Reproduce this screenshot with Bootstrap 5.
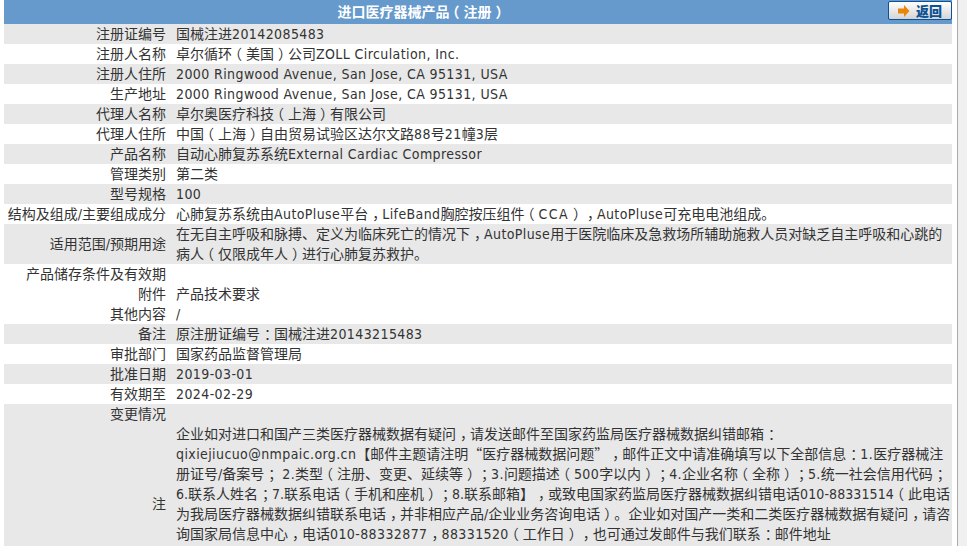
<!DOCTYPE html>
<html lang="zh"><head><meta charset="utf-8">
<link href="https://cdn.jsdelivr.net/npm/bootstrap@5.3.0/dist/css/bootstrap.min.css" rel="stylesheet">
<style>
html,body{height:100%;overflow:hidden}
body{font-family:"DejaVu Sans Condensed","Noto Sans CJK SC",sans-serif;font-size:14px;line-height:20px;color:#333;background:#fff;text-spacing-trim:space-all}
.page-shell{height:546px}
.main-area{width:957px;padding:0 5px 0 4px;height:546px;overflow:hidden}
.side-track{width:10px;background:#f0f0f0;border-left:1px solid #aaa}
.head-bar{height:24px;background:#6699cc;color:#fff;font-weight:700;font-size:14px;line-height:24px;padding-right:113px}
.back-btn{right:0;top:1px;width:64px;height:19px;border:1px solid #0d5296;border-radius:2px;background:linear-gradient(#fff,#d4d4d4);color:#0d5296;font-size:13px;font-weight:900;line-height:17px;font-family:"Noto Sans CJK SC",sans-serif;gap:6px}
.info-table{width:100%;table-layout:fixed;border-collapse:collapse}
.info-table td{padding:0;line-height:20px;vertical-align:middle}
.info-table td.lbl{width:162px;text-align:right}
.info-table td.val{padding-left:10px}
.info-table tr.shade td{background:#e8e8e8}
.info-table td.note-val{padding-bottom:40px}
.lat{letter-spacing:.4px}
.lat-c{letter-spacing:1.4px}
.lat-t{letter-spacing:.1px}
.lp,.rp,.qo,.qc{font-style:normal}
.lp{margin-left:-4px;margin-right:4px}
.rp{margin-left:4px;margin-right:-4px}
.qo,.qc{font-family:"Noto Sans CJK SC",sans-serif;line-height:0;display:inline-block;width:14px}
.qo{text-align:right}
.qc{text-align:left}
</style></head><body>
<div class="page-shell d-flex">
<div class="main-area">
<div class="head-bar position-relative text-center">进口医疗器械产品<i class="lp">（</i>注册<i class="rp">）</i>
<a class="back-btn position-absolute d-flex align-items-center justify-content-center text-decoration-none" href="#"><svg width="12" height="12" viewBox="0 0 12 12"><path d="M0 3.5H6V0L11.5 6L6 12V8.5H0Z" fill="#e8860a"/></svg><span>返回</span></a></div>
<table class="info-table"><tbody>
<tr class="shade"><td class="lbl">注册证编号</td><td class="val">国械注进<span class="lat">20142085483</span></td></tr>
<tr><td class="lbl">注册人名称</td><td class="val">卓尔循环<i class="lp">（</i>美国<i class="rp">）</i>公司<span class="lat">ZOLL Circulation, Inc.</span></td></tr>
<tr class="shade"><td class="lbl">注册人住所</td><td class="val lat">2000 Ringwood Avenue, San Jose, CA 95131, USA</td></tr>
<tr><td class="lbl">生产地址</td><td class="val lat">2000 Ringwood Avenue, San Jose, CA 95131, USA</td></tr>
<tr class="shade"><td class="lbl">代理人名称</td><td class="val">卓尔奥医疗科技<i class="lp">（</i>上海<i class="rp">）</i>有限公司</td></tr>
<tr><td class="lbl">代理人住所</td><td class="val">中国<i class="lp">（</i>上海<i class="rp">）</i>自由贸易试验区达尔文路<span class="lat">88</span>号<span class="lat">21</span>幢<span class="lat">3</span>层</td></tr>
<tr class="shade"><td class="lbl">产品名称</td><td class="val">自动心肺复苏系统<span class="lat">External Cardiac Compressor</span></td></tr>
<tr><td class="lbl">管理类别</td><td class="val">第二类</td></tr>
<tr class="shade"><td class="lbl">型号规格</td><td class="val lat">100</td></tr>
<tr><td class="lbl">结构及组成/主要组成成分</td><td class="val">心肺复苏系统由<span class="lat">AutoPluse</span>平台<i class="rp">，</i><span class="lat">LifeBand</span>胸腔按压组件<i class="lp">（</i><span class="lat-c">CCA</span><i class="rp">）</i><i class="rp">，</i><span class="lat">AutoPluse</span>可充电电池组成。</td></tr>
<tr class="shade"><td class="lbl">适用范围/预期用途</td><td class="val">在无自主呼吸和脉搏、定义为临床死亡的情况下<i class="rp">，</i><span class="lat">AutoPluse</span>用于医院临床及急救场所辅助施救人员对缺乏自主呼吸和心跳的病人<i class="lp">（</i>仅限成年人<i class="rp">）</i>进行心肺复苏救护。</td></tr>
<tr><td class="lbl">产品储存条件及有效期</td><td class="val"></td></tr>
<tr><td class="lbl">附件</td><td class="val">产品技术要求</td></tr>
<tr><td class="lbl">其他内容</td><td class="val">/</td></tr>
<tr class="shade"><td class="lbl">备注</td><td class="val">原注册证编号<i class="rp">：</i>国械注进<span class="lat">20143215483</span></td></tr>
<tr><td class="lbl">审批部门</td><td class="val">国家药品监督管理局</td></tr>
<tr class="shade"><td class="lbl">批准日期</td><td class="val lat">2019-03-01</td></tr>
<tr><td class="lbl">有效期至</td><td class="val lat">2024-02-29</td></tr>
<tr class="shade"><td class="lbl">变更情况</td><td class="val"></td></tr>
<tr class="shade"><td class="lbl">注</td><td class="val note-val">企业如对进口和国产三类医疗器械数据有疑问<i class="rp">，</i>请发送邮件至国家药监局医疗器械数据纠错邮箱<i class="rp">：</i><span class="lat">qixiejiucuo@nmpaic.org.cn</span>【邮件主题请注明<i class="qo">“</i>医疗器械数据问题<i class="qc">”</i><i class="rp">，</i>邮件正文中请准确填写以下全部信息<i class="rp">：</i><span class="lat">1.</span>医疗器械注册证号/备案号<i class="rp">；</i> <span class="lat">2.</span>类型<i class="lp">（</i>注册、变更、延续等<i class="rp">）</i><i class="rp">；</i><span class="lat">3.</span>问题描述<i class="lp">（</i><span class="lat">500</span>字以内<i class="rp">）</i><i class="rp">；</i><span class="lat">4.</span>企业名称<i class="lp">（</i>全称<i class="rp">）</i><i class="rp">；</i><span class="lat">5.</span>统一社会信用代码<i class="rp">；</i>6.联系人姓名<i class="rp">；</i>7.联系电话<i class="lp">（</i>手机和座机<i class="rp">）</i><i class="rp">；</i>8.联系邮箱】<i class="rp">，</i>或致电国家药监局医疗器械数据纠错电话<span class="lat-t">010-88331514</span><i class="lp">（</i>此电话为我局医疗器械数据纠错联系电话<i class="rp">，</i>并非相应产品/企业业务咨询电话<i class="rp">）</i>。企业如对国产一类和二类医疗器械数据有疑问<i class="rp">，</i>请咨询国家局信息中心<i class="rp">，</i>电话<span class="lat">010-88332877</span><i class="rp">，</i><span class="lat">88331520</span><i class="lp">（</i>工作日<i class="rp">）</i><i class="rp">，</i>也可通过发邮件与我们联系<i class="rp">：</i>邮件地址</td></tr>
</tbody></table>
</div>
<div class="side-track"></div>
</div>
<script src="https://cdn.jsdelivr.net/npm/bootstrap@5.3.0/dist/js/bootstrap.bundle.min.js"></script>
</body></html>
